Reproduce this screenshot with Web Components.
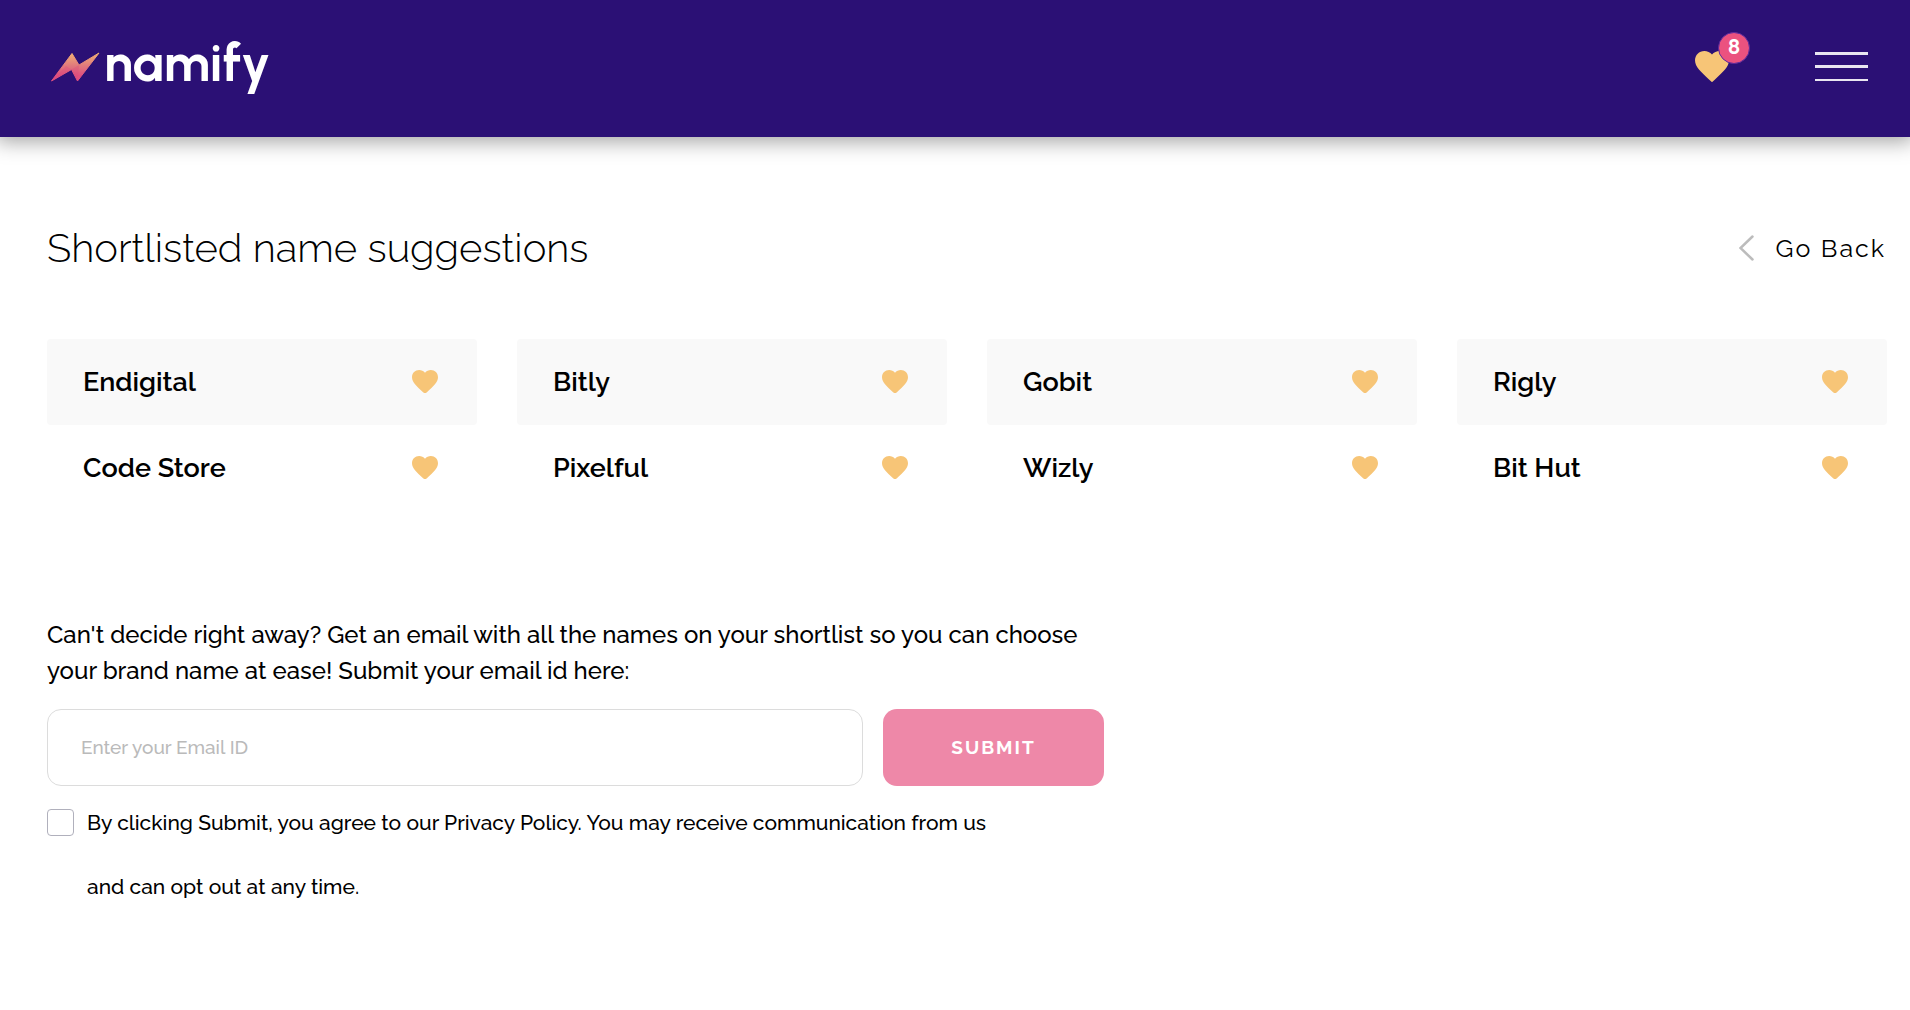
<!DOCTYPE html>
<html lang="en">
<head>
<meta charset="utf-8">
<meta name="viewport" content="width=device-width, initial-scale=1">
<title>Shortlist | Namify</title>
<style>
  body { margin: 0; background: #fff; color: #000; font-family: Raleway, Lato, "Open Sans", sans-serif; }
</style>
</head>
<body>
<shortlist-page></shortlist-page>
<script>
const define = (name, html) => {
  const template = document.createElement('template');
  template.innerHTML = '<style>*{box-sizing:border-box}</style>' + html;
  customElements.define(name, class extends HTMLElement {
    constructor() {
      super();
      this.attachShadow({ mode: 'open' }).append(template.content.cloneNode(true));
    }
  });
};

define('heart-icon', `
<style>
  :host { display: block; width: 26px; color: #f7c577; }
  svg { display: block; width: 100%; }
</style>
<svg viewBox="2 3 20 18.35" fill="currentColor" aria-hidden="true"><path d="M12 21.35l-1.45-1.32C5.4 15.36 2 12.28 2 8.5 2 5.42 4.42 3 7.5 3c1.74 0 3.41.81 4.5 2.09C13.09 3.81 14.76 3 16.5 3 19.58 3 22 5.42 22 8.5c0 3.78-3.4 6.86-8.55 11.54L12 21.35z"/></svg>`);

define('namify-logo', `
<style>
  :host { display: block; }
  a { display: flex; align-items: center; gap: 4px; color: #fff; text-decoration: none; }
  svg { display: block; width: 50px; height: 30px; }
  span { font: 700 52px/60px Urbanist, Quicksand, Lato, sans-serif; padding-bottom: 8px; }
</style>
<a href="#" aria-label="namify">
  <svg viewBox="0 0 50 30" aria-hidden="true">
    <defs><linearGradient id="g" x1="0" y1="0" x2="0" y2="1"><stop offset="0" stop-color="#f2b274"/><stop offset=".45" stop-color="#e17a7c"/><stop offset=".8" stop-color="#df4f80"/></linearGradient></defs>
    <path fill="url(#g)" stroke="url(#g)" stroke-linejoin="round" d="M1.500 29 22 1.500 29 13 49 1 27.500 29 21.500 17.500z"/>
    <path fill="#d94c7c" opacity=".3" d="M1.500 29 16 14 21.500 17.500zM21.500 17.500 29 13 27.500 29z"/>
  </svg>
  <span>namify</span>
</a>`);

define('site-header', `
<style>
  :host { display: block; position: relative; background: #2b1075; box-shadow: 0 0 20px 4px rgba(0,0,0,.38); }
  header { display: flex; align-items: center; justify-content: space-between; height: 137px; padding: 0 42px 4px 50px; }
  nav { display: flex; align-items: center; gap: 86px; }
  .saved { position: relative; display: block; }
  .saved heart-icon { width: 34px; }
  .count { position: absolute; left: 23px; top: -19px; width: 32px; height: 32px; border: 1px solid #5b2a9e; border-radius: 50%; background: #eb527f; color: #fff; font-weight: 700; font-size: 20px; line-height: 29px; text-align: center; font-feature-settings: "lnum"; }
  button { display: flex; flex-direction: column; gap: 10px; width: 53px; padding: 0; border: 0; background: none; }
  i { height: 3px; background: #e9e6f1; }
  i:last-child { height: 2px; margin-top: 1px; }
</style>
<header>
  <namify-logo></namify-logo>
  <nav>
    <a class="saved" href="#" aria-label="Shortlisted names"><heart-icon></heart-icon><span class="count">8</span></a>
    <button type="button" aria-label="Menu"><i></i><i></i><i></i></button>
  </nav>
</header>`);

define('page-title', `
<style>
  :host { display: flex; align-items: center; justify-content: space-between; }
  h1 { margin: 0; font-weight: 300; font-size: 40px; line-height: 48px; }
  a { display: flex; align-items: center; gap: 22px; padding-right: 1px; color: #000; font-size: 25px; line-height: 32px; letter-spacing: 2px; text-decoration: none; }
  svg { display: block; width: 15px; height: 26px; }
</style>
<h1><slot></slot></h1>
<a href="#"><svg viewBox="0 0 15 26" fill="none" stroke="#bcbcbc" stroke-width="2.500" stroke-linecap="round" aria-hidden="true"><path d="M13.500 1.500 1.500 13 13.500 24.500"/></svg>Go Back</a>`);

define('name-card', `
<style>
  :host { display: flex; align-items: center; justify-content: space-between; height: 86px; padding: 0 39px 0 36px; border-radius: 4px; font-weight: 600; font-size: 27px; line-height: 36px; }
  :host([shaded]) { background: #f9f9f9; }
  button { padding: 0 0 1px; border: 0; background: none; }
</style>
<slot></slot>
<button type="button" aria-label="Remove from shortlist"><heart-icon></heart-icon></button>`);

define('name-grid', `
<style>:host { display: grid; grid-template-columns: repeat(4, 1fr); column-gap: 40px; }</style>
<slot></slot>`);

define('email-form', `
<style>
  :host { display: block; max-width: 1057px; }
  p { margin: 0 0 20px; font-weight: 500; font-size: 24px; line-height: 36px; }
  .row { display: flex; gap: 20px; height: 77px; }
  input { font: inherit; }
  .email { flex: 1; min-width: 0; padding: 0 33px 2px; border: 1px solid #dcdcdc; border-radius: 14px; background: #fff; font-weight: 500; font-size: 19px; outline: 0; }
  .email::placeholder { color: #bababa; opacity: 1; }
  button { width: 221px; padding: 0 0 2px; border: 0; border-radius: 14px; background: #ee88a8; color: #fff; font: inherit; font-weight: 700; font-size: 19px; letter-spacing: 2px; }
  .consent { display: flex; gap: 13px; padding-top: 5px; font-weight: 500; font-size: 21px; line-height: 64px; }
  .consent input { appearance: none; flex: none; width: 27px; height: 27px; margin: 18px 0 0; border: 1px solid #b0b0bc; border-radius: 4px; background: #fff; }
</style>
<form>
  <p><label for="email"><slot></slot></label></p>
  <div class="row">
    <input class="email" id="email" type="email" placeholder="Enter your Email ID">
    <button type="button">SUBMIT</button>
  </div>
  <div class="consent">
    <input id="agree" type="checkbox">
    <label for="agree">By clicking Submit, you agree to our Privacy Policy. You may receive communication from us<br>and can opt out at any time.</label>
  </div>
</form>`);

define('shortlist-page', `
<style>
  :host { display: block; }
  main { padding: 87px 23px 60px 47px; }
  name-grid { margin: 67px 0 106px; }
</style>
<site-header></site-header>
<main>
  <page-title>Shortlisted name suggestions</page-title>
  <name-grid>
    <name-card shaded>Endigital</name-card><name-card shaded>Bitly</name-card><name-card shaded>Gobit</name-card><name-card shaded>Rigly</name-card>
    <name-card>Code Store</name-card><name-card>Pixelful</name-card><name-card>Wizly</name-card><name-card>Bit Hut</name-card>
  </name-grid>
  <email-form>Can't decide right away? Get an email with all the names on your shortlist so you can choose<br>your brand name at ease! Submit your email id here:</email-form>
</main>`);
</script>
</body>
</html>
